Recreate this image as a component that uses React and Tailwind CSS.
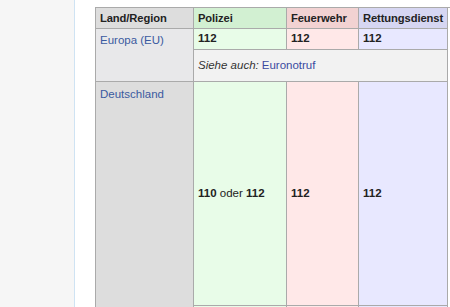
import React from "react";

const font = { fontFamily: '"Liberation Sans", Arial, sans-serif' };

export default function App() {
  const cell = "border-r border-b border-[#aaaaaa] px-[4px]";
  const head = `${cell} flex items-center font-bold text-[11.2px] tracking-[-0.1px] whitespace-nowrap overflow-hidden`;
  return (
    <div
      className="flex h-[307px] w-[450px] overflow-hidden bg-white text-[11.5px] text-[#222222]"
      style={font}
    >
      <div className="w-[74px] shrink-0 bg-[#f6f6f6]" />
      <div className="flex-1 border-l border-[#cfe3f3] bg-white pl-[20px] pt-[7px]">
        <div className="grid grid-cols-[98px_93px_72px_89px] grid-rows-[21px_21px_32px_224px_120px] border-l border-t border-[#aaaaaa]">
          <div className={`${head} bg-[#dddddd]`}>Land/Region</div>
          <div className={`${head} bg-[#d2f0d2]`}>Polizei</div>
          <div className={`${head} bg-[#f2d2d2]`}>Feuerwehr</div>
          <div className={`${head} bg-[#d6d6f2] px-[3px]`}>Rettungsdienst</div>

          <div className={`${cell} row-span-2 bg-[#e8e8ea] pt-[3px] text-[#3a5aa0]`}>Europa (EU)</div>
          <div className={`${cell} flex items-center bg-[#e8fce8] font-bold`}>112</div>
          <div className={`${cell} flex items-center bg-[#ffe8e8] font-bold`}>112</div>
          <div className={`${cell} flex items-center bg-[#e8e8ff] font-bold`}>112</div>

          <div className={`${cell} col-span-3 flex items-center bg-[#f2f2f2]`}>
            <span className="italic text-[#333333]">Siehe auch:</span>
            <span className="ml-[3px] text-[#3a4aa0]">Euronotruf</span>
          </div>

          <div className={`${cell} row-span-2 bg-[#dddddd] pt-[4px] text-[#3a5aa0]`}>Deutschland</div>
          <div className={`${cell} flex items-center bg-[#e8fce8]`}>
            <span>
              <b>110</b> oder <b>112</b>
            </span>
          </div>
          <div className={`${cell} flex items-center bg-[#ffe8e8] font-bold`}>112</div>
          <div className={`${cell} flex items-center bg-[#e8e8ff] font-bold`}>112</div>

          <div className={`${cell} bg-[#e8fce8]`} />
          <div className={`${cell} bg-[#ffe8e8]`} />
          <div className={`${cell} bg-[#e8e8ff]`} />
        </div>
      </div>
    </div>
  );
}
